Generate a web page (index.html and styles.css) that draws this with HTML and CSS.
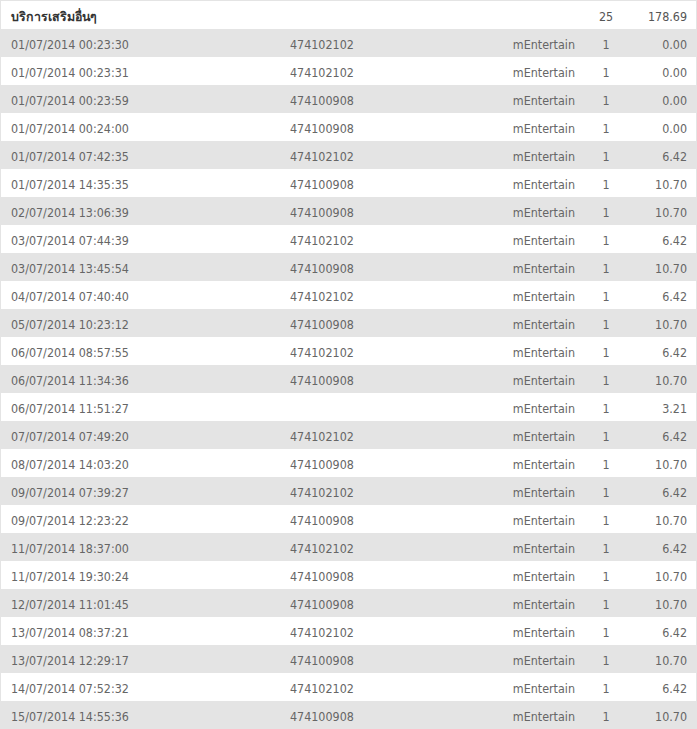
FILE: index.html
```html
<!DOCTYPE html>
<html lang="th">
<head>
<meta charset="utf-8">
<link rel="stylesheet" href="styles.css">
</head>
<body>
<div class="list">
  <div class="row head"><span>บริการเสริมอื่นๆ</span><span></span><span></span><span class="c">25</span><span class="r">178.69</span></div>
  <div class="row"><span>01/07/2014 00:23:30</span><span>474102102</span><span class="r">mEntertain</span><span class="c">1</span><span class="r">0.00</span></div>
  <div class="row"><span>01/07/2014 00:23:31</span><span>474102102</span><span class="r">mEntertain</span><span class="c">1</span><span class="r">0.00</span></div>
  <div class="row"><span>01/07/2014 00:23:59</span><span>474100908</span><span class="r">mEntertain</span><span class="c">1</span><span class="r">0.00</span></div>
  <div class="row"><span>01/07/2014 00:24:00</span><span>474100908</span><span class="r">mEntertain</span><span class="c">1</span><span class="r">0.00</span></div>
  <div class="row"><span>01/07/2014 07:42:35</span><span>474102102</span><span class="r">mEntertain</span><span class="c">1</span><span class="r">6.42</span></div>
  <div class="row"><span>01/07/2014 14:35:35</span><span>474100908</span><span class="r">mEntertain</span><span class="c">1</span><span class="r">10.70</span></div>
  <div class="row"><span>02/07/2014 13:06:39</span><span>474100908</span><span class="r">mEntertain</span><span class="c">1</span><span class="r">10.70</span></div>
  <div class="row"><span>03/07/2014 07:44:39</span><span>474102102</span><span class="r">mEntertain</span><span class="c">1</span><span class="r">6.42</span></div>
  <div class="row"><span>03/07/2014 13:45:54</span><span>474100908</span><span class="r">mEntertain</span><span class="c">1</span><span class="r">10.70</span></div>
  <div class="row"><span>04/07/2014 07:40:40</span><span>474102102</span><span class="r">mEntertain</span><span class="c">1</span><span class="r">6.42</span></div>
  <div class="row"><span>05/07/2014 10:23:12</span><span>474100908</span><span class="r">mEntertain</span><span class="c">1</span><span class="r">10.70</span></div>
  <div class="row"><span>06/07/2014 08:57:55</span><span>474102102</span><span class="r">mEntertain</span><span class="c">1</span><span class="r">6.42</span></div>
  <div class="row"><span>06/07/2014 11:34:36</span><span>474100908</span><span class="r">mEntertain</span><span class="c">1</span><span class="r">10.70</span></div>
  <div class="row"><span>06/07/2014 11:51:27</span><span></span><span class="r">mEntertain</span><span class="c">1</span><span class="r">3.21</span></div>
  <div class="row"><span>07/07/2014 07:49:20</span><span>474102102</span><span class="r">mEntertain</span><span class="c">1</span><span class="r">6.42</span></div>
  <div class="row"><span>08/07/2014 14:03:20</span><span>474100908</span><span class="r">mEntertain</span><span class="c">1</span><span class="r">10.70</span></div>
  <div class="row"><span>09/07/2014 07:39:27</span><span>474102102</span><span class="r">mEntertain</span><span class="c">1</span><span class="r">6.42</span></div>
  <div class="row"><span>09/07/2014 12:23:22</span><span>474100908</span><span class="r">mEntertain</span><span class="c">1</span><span class="r">10.70</span></div>
  <div class="row"><span>11/07/2014 18:37:00</span><span>474102102</span><span class="r">mEntertain</span><span class="c">1</span><span class="r">6.42</span></div>
  <div class="row"><span>11/07/2014 19:30:24</span><span>474100908</span><span class="r">mEntertain</span><span class="c">1</span><span class="r">10.70</span></div>
  <div class="row"><span>12/07/2014 11:01:45</span><span>474100908</span><span class="r">mEntertain</span><span class="c">1</span><span class="r">10.70</span></div>
  <div class="row"><span>13/07/2014 08:37:21</span><span>474102102</span><span class="r">mEntertain</span><span class="c">1</span><span class="r">6.42</span></div>
  <div class="row"><span>13/07/2014 12:29:17</span><span>474100908</span><span class="r">mEntertain</span><span class="c">1</span><span class="r">10.70</span></div>
  <div class="row"><span>14/07/2014 07:52:32</span><span>474102102</span><span class="r">mEntertain</span><span class="c">1</span><span class="r">6.42</span></div>
  <div class="row"><span>15/07/2014 14:55:36</span><span>474100908</span><span class="r">mEntertain</span><span class="c">1</span><span class="r">10.70</span></div>
</div>
</body>
</html>
```
FILE: styles.css
```css
html, body {
  margin: 0;
  padding: 0;
  background: #ffffff;
}
.list {
  border: 1px solid #e4e4e4;
  font-family: "DejaVu Sans Condensed", "DejaVu Sans", "Noto Sans", sans-serif;
  font-size: 12.4px;
  color: #666666;
}
.row {
  display: grid;
  grid-template-columns: 279px 1fr 135px 62px 50px;
  align-items: center;
  height: 28px;
  padding: 2px 9px 0 10px;
  box-sizing: border-box;
}
.row:nth-child(even) {
  background: #e4e4e4;
}
.head {
  color: #333333;
  font-weight: bold;
}
.head .c, .head .r {
  font-weight: normal;
  color: #555555;
}
.r { text-align: right; }
.c { text-align: center; }
```
